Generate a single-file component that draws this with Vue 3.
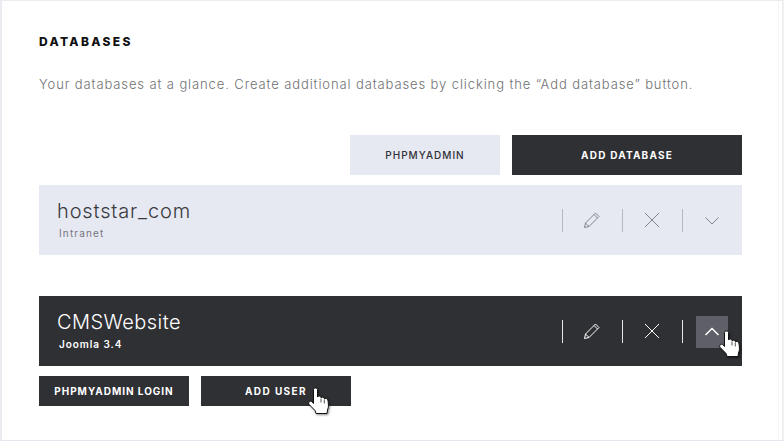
<script setup>
const top = [
  { label: 'PHPMYADMIN', cls: 'btn light' },
  { label: 'ADD DATABASE', cls: 'btn dark wide' }
]
const pencil = 'M2.500 17.500l1-4.500 10-10 3.500 3.500-10 10-4.500 1zM3.500 13l3.500 3.500M12 4.500L15.500 8'
const cross = 'M3 3l14 14M17 3L3 17'
const down = 'M3.500 7.500l6.500 6.500 6.500-6.500'
const up = 'M3.500 13L10 6.500 16.500 13'
const hand = 'M5.500 2.500C5.500 .5 9.500 .5 9.500 2.500V10c.5-1.300 3.200-1.300 3.500.2v.8c.5-1.200 3-1.200 3.300.3v.7c.6-1 3.200-.9 3.600 1 .5 3.400 1.100 7-.4 10l-.5 3.500H8l-1-3-5.800-6c-1.500-2 .8-4.300 2.600-2.800l1.700 1.800V2.500z'
</script>

<template>
  <div class="frame">
    <div class="page">
      <h1 class="title">DATABASES</h1>
      <p class="desc">Your databases at a glance. Create additional databases by clicking the “Add database” button.</p>
      <div class="top-actions">
        <button v-for="b in top" :key="b.label" :class="b.cls">{{ b.label }}</button>
      </div>

      <section class="row row-light">
        <div class="info">
          <div class="name">hoststar_com</div>
          <div class="sub">Intranet</div>
        </div>
        <div class="tools">
          <div class="tool"><svg viewBox="0 0 20 20" width="20" height="20"><path :d="pencil" /></svg></div>
          <div class="tool"><svg viewBox="0 0 20 20" width="20" height="20"><path :d="cross" /></svg></div>
          <div class="tool"><svg viewBox="0 0 20 20" width="20" height="20"><path :d="down" /></svg></div>
        </div>
      </section>

      <section class="row row-dark">
        <div class="info">
          <div class="name">CMSWebsite</div>
          <div class="sub">Joomla 3.4</div>
        </div>
        <div class="tools">
          <div class="tool"><svg viewBox="0 0 20 20" width="20" height="20"><path :d="pencil" /></svg></div>
          <div class="tool"><svg viewBox="0 0 20 20" width="20" height="20"><path :d="cross" /></svg></div>
          <div class="tool">
            <span class="hover-box"><svg viewBox="0 0 20 20" width="20" height="20"><path :d="up" /></svg></span>
            <svg class="hand hand-a" viewBox="0 0 22 29" width="22" height="29"><path :d="hand" /><path class="gap" d="M13 11.500v4M16.300 12.500v4" /></svg>
          </div>
        </div>
      </section>

      <div class="sub-actions">
        <button class="btn dark small">PHPMYADMIN LOGIN</button>
        <button class="btn dark small user">ADD USER
          <svg class="hand hand-b" viewBox="0 0 22 29" width="22" height="29"><path :d="hand" /><path class="gap" d="M13 11.500v4M16.300 12.500v4" /></svg>
        </button>
      </div>
    </div>
  </div>
</template>

<style>
html, body { margin: 0; background: #fff; }
</style>

<style scoped>
.frame {
  box-sizing: border-box;
  width: 784px;
  height: 441px;
  overflow: hidden;
  border-top: 1px solid #ececf0;
  border-left: 2px solid #ececf0;
  border-bottom: 1px solid #e6e6ee;
  border-right: 2px solid #f0f0f2;
}
.page {
  box-sizing: border-box;
  width: 777px;
  height: 439px;
  padding: 35px 0 0 37px;
  border-right: 1px solid #f6f6f8;
  font-family: "Inter", "Liberation Sans", sans-serif;
}
.title {
  margin: 0;
  font-size: 12px;
  line-height: 12px;
  font-weight: 800;
  letter-spacing: 2.350px;
  color: #111;
}
.desc {
  margin: 27px 0 0;
  font-size: 13px;
  line-height: 18px;
  font-weight: 300;
  letter-spacing: .89px;
  color: #717174;
  white-space: nowrap;
}
.top-actions {
  display: flex;
  justify-content: flex-end;
  gap: 12px;
  margin-top: 42px;
  width: 703px;
}
.btn {
  position: relative;
  width: 150px;
  height: 40px;
  padding: 0;
  border: 0;
  font-family: inherit;
  font-size: 10px;
  letter-spacing: 1px;
  cursor: pointer;
}
.wide { width: 230px; }
.light { background: #e6e8f2; color: #303136; font-weight: 500; }
.dark { background: #2f3034; color: #fff; font-weight: 700; letter-spacing: 1.2px; }
.small { height: 30px; letter-spacing: .95px; }
.user { letter-spacing: 1.4px; }
.row {
  display: flex;
  align-items: center;
  justify-content: space-between;
  width: 703px;
  height: 70px;
  padding-left: 18px;
  box-sizing: border-box;
}
.row-light { background: #e6e8f2; margin-top: 10px; color: #3a3b40; }
.row-dark { background: #2f3034; margin-top: 41px; color: #fff; }
.info { margin-top: -3px; }
.name {
  font-size: 20px;
  line-height: 24px;
  font-weight: 300;
  letter-spacing: .85px;
}
.row-dark .name { letter-spacing: .45px; }
.sub {
  margin: 4px 0 0 2px;
  font-size: 10px;
  line-height: 12px;
  letter-spacing: 1.15px;
}
.row-light .sub { color: #75767c; }
.row-dark .sub { font-weight: 600; letter-spacing: .95px; }
.tools { display: flex; }
.tool {
  position: relative;
  width: 60px;
  height: 23px;
  display: flex;
  align-items: center;
  justify-content: center;
  box-sizing: border-box;
  padding-right: 2px;
  border-left: 1px solid #b6b7bf;
}
.row-dark .tool { border-left-color: #e6e6e6; }
.tool svg path {
  fill: none;
  stroke: #85868c;
  stroke-width: 1;
}
.row-dark .tool svg path { stroke: #fff; }
.hover-box {
  position: absolute;
  left: 13px;
  top: -4px;
  width: 32px;
  height: 32px;
  display: flex;
  align-items: center;
  justify-content: center;
  background: #5f6067;
}
.row-dark .hover-box svg path { stroke-width: 1.500; }
.sub-actions {
  display: flex;
  gap: 12px;
  margin-top: 10px;
}
.hand {
  position: absolute;
  filter: drop-shadow(1px 1px 1px rgba(0, 0, 0, .45));
}
.tool .hand-a { left: 36px; top: 10px; }
.hand-b { left: 107px; top: 11px; }
.row-dark .tool svg.hand path, .hand path {
  fill: #fff;
  stroke: #111;
  stroke-width: 1;
}
.row-dark .tool svg.hand path.gap, .hand path.gap {
  fill: none;
  stroke: #555;
}
</style>
